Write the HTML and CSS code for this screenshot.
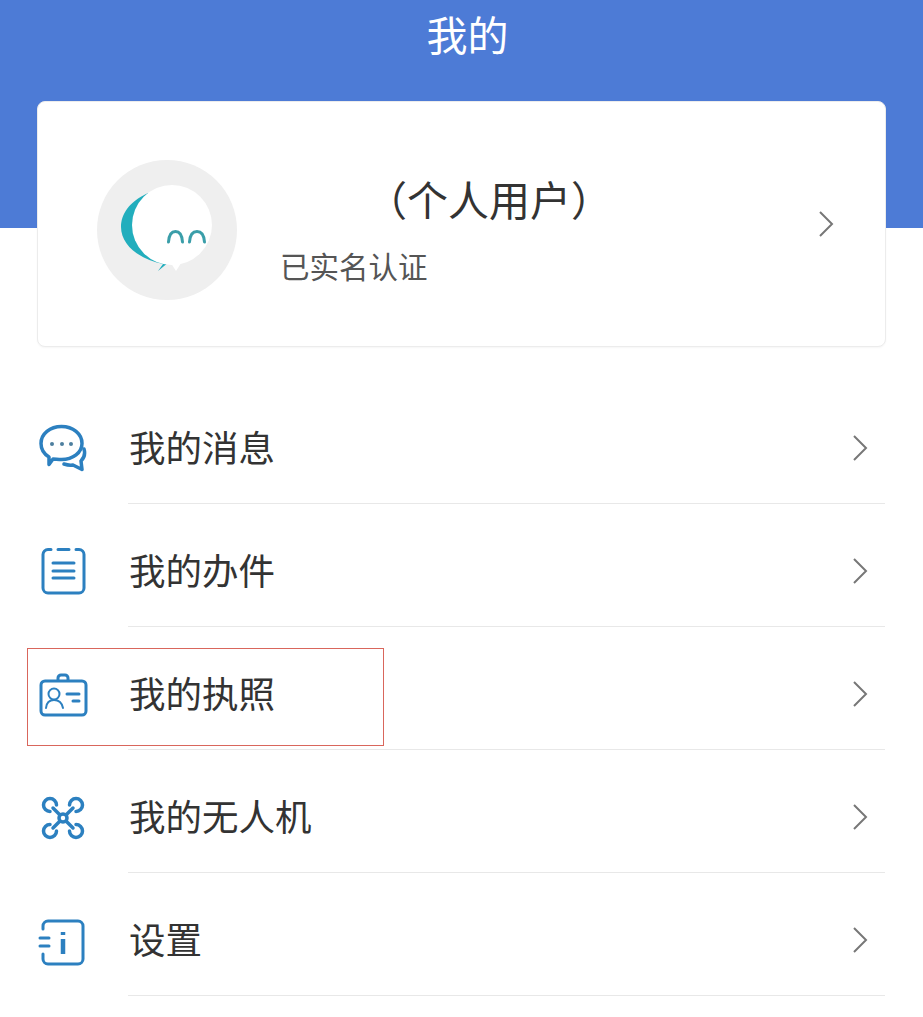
FILE: index.html
```html
<!DOCTYPE html>
<html lang="zh-CN">
<head>
    <meta charset="UTF-8">
    <meta name="viewport" content="width=device-width, initial-scale=1.0">
    <title>我的</title>
    <link rel="stylesheet" href="styles.css">
</head>
<body>
    <header class="top-bar">
        <h1 class="top-title">我的</h1>
    </header>

    <section class="user-card">
        <svg class="avatar" viewBox="0 0 140 140">
            <circle cx="70" cy="70" r="70" fill="#efefef"/>
            <path d="M51 33C32 42 24 54 24 67C24 85 42 99 66 104L61 111L72 102L60 60Z" fill="#22aebd"/>
            <path d="M72 100L79 111L86 100Z" fill="#fff"/>
            <circle cx="75" cy="65" r="40" fill="#fff"/>
            <path class="avatar-eye" d="M71.500 82C72 75 74.500 71.500 78.500 71.500C82.500 71.500 85 75 85.500 82M92.500 82C93 75 96 71.500 100 71.500C104 71.500 107 75 107.500 82"/>
        </svg>
        <div class="user-info">
            <div class="user-name">（个人用户）</div>
            <div class="user-status">已实名认证</div>
        </div>
        <svg class="chevron" viewBox="0 0 16 28"><path d="M2 2L14 14L2 26"/></svg>
    </section>

    <ul class="menu">
        <li class="menu-row">
            <svg class="menu-icon icon-heavy" viewBox="0 0 52 52">
                <path d="M13 33C8 30 5 25 5 19.500C5 10 14 2.500 25.500 2.500C37 2.500 46 10 46 19.500C46 28.500 37 35.500 25.500 35.500C22 35.500 19.500 35 17 35L13 40.500Z"/>
                <path d="M48 25C49.500 30 48 34 45 37L46 45.500L37 41C34 41.500 31 41 28 40"/>
                <circle class="icon-dot" cx="16" cy="20" r="2"/>
                <circle class="icon-dot" cx="26" cy="20" r="2"/>
                <circle class="icon-dot" cx="35" cy="20" r="2"/>
            </svg>
            <div class="menu-body">
                <span class="menu-label">我的消息</span>
                <svg class="chevron" viewBox="0 0 16 28"><path d="M2 2L14 14L2 26"/></svg>
            </div>
        </li>
        <li class="menu-row">
            <svg class="menu-icon" viewBox="0 0 52 52">
                <path d="M15 2.500H12a5 5 0 0 0-5 5V41a5 5 0 0 0 5 5H43a5 5 0 0 0 5-5V7.500a5 5 0 0 0-5-5H40M22 2.500H33"/>
                <path d="M17 16H38M17 24H38M17 31H38"/>
            </svg>
            <div class="menu-body">
                <span class="menu-label">我的办件</span>
                <svg class="chevron" viewBox="0 0 16 28"><path d="M2 2L14 14L2 26"/></svg>
            </div>
        </li>
        <li class="menu-row">
            <svg class="menu-icon" viewBox="0 0 52 52">
                <path d="M9 11H46a4 4 0 0 1 4 4V41a4 4 0 0 1-4 4H9a4 4 0 0 1-4-4V15a4 4 0 0 1 4-4Z"/>
                <path d="M22 10V8a3 3 0 0 1 3-3H29a3 3 0 0 1 3 3V10"/>
                <circle class="icon-thin" cx="18" cy="24" r="5.500"/>
                <path class="icon-thin" d="M10 38C10.500 33 13 30 18 30C23 30 26 33 27 38"/>
                <path d="M31 24H43M37 31H43"/>
            </svg>
            <div class="menu-body">
                <span class="menu-label">我的执照</span>
                <svg class="chevron" viewBox="0 0 16 28"><path d="M2 2L14 14L2 26"/></svg>
            </div>
            <div class="row-mark"></div>
        </li>
        <li class="menu-row">
            <svg class="menu-icon icon-heavy" viewBox="0 0 52 52">
                <defs>
                    <path id="rotor" d="M-6.500 -13A6.500 6.500 0 1 0 -13 -6.500M-3.500 -3.500L-10 -10"/>
                </defs>
                <g transform="translate(27 25)">
                    <use href="#rotor"/>
                    <use href="#rotor" transform="rotate(90)"/>
                    <use href="#rotor" transform="rotate(180)"/>
                    <use href="#rotor" transform="rotate(270)"/>
                    <circle r="4"/>
                </g>
            </svg>
            <div class="menu-body">
                <span class="menu-label">我的无人机</span>
                <svg class="chevron" viewBox="0 0 16 28"><path d="M2 2L14 14L2 26"/></svg>
            </div>
        </li>
        <li class="menu-row">
            <svg class="menu-icon" viewBox="0 0 52 52">
                <path d="M7 13V10a5 5 0 0 1 5-5H42a5 5 0 0 1 5 5V43a5 5 0 0 1-5 5H12a5 5 0 0 1-5-5V38"/>
                <path d="M4 22H13M4 30H13"/>
                <path class="icon-bold" d="M27 16V19M27 23V38"/>
            </svg>
            <div class="menu-body">
                <span class="menu-label">设置</span>
                <svg class="chevron" viewBox="0 0 16 28"><path d="M2 2L14 14L2 26"/></svg>
            </div>
        </li>
    </ul>
</body>
</html>
```

FILE: styles.css
```css
* { box-sizing: border-box; }
html, body { height: 100%; }
body {
    margin: 0; background: #fff; color: #333; overflow: hidden;
    font-family: "Noto Sans CJK SC", "Noto Sans", sans-serif;
}

.top-bar { height: 228px; background: #4d7bd6; }
.top-title {
    margin: 0; padding-left: 12px; height: 66px; line-height: 66px; text-align: center;
    font-size: 41px; font-weight: 400; color: #fff;
}

.user-card {
    display: flex; align-items: center; height: 246px;
    margin: -127px 37px 0 37px; padding: 0 51px 0 59px;
    background: #fff; border: 1px solid #ececec; border-radius: 8px;
    box-shadow: 0 1px 2px rgba(0, 0, 0, 0.04);
}
.avatar { width: 140px; height: 140px; flex: none; margin-top: 11px; }
.avatar-eye { fill: none; stroke: #3a9ea9; stroke-width: 3; stroke-linecap: round; }
.user-info { flex: 1; margin: 9px 0 0 43px; }
.user-name { padding-left: 86px; font-size: 41px; line-height: 56px; color: #333; }
.user-status { margin-top: 17px; font-size: 29.500px; line-height: 44px; color: #555; }

.chevron { width: 16px; height: 28px; flex: none; fill: none; stroke: #777; stroke-width: 2; }

.menu { list-style: none; margin: 34px 0 0 0; padding: 0; }
.menu-row { position: relative; display: flex; height: 123px; padding-left: 36px; }
.menu-icon {
    width: 52px; height: 52px; flex: none; margin-top: 43px;
    fill: none; stroke: #2c80c0; stroke-width: 3; stroke-linecap: round; stroke-linejoin: round;
}
.icon-dot { fill: #4d7f9f; stroke: none; }
.icon-bold { stroke-width: 4.500; stroke-linecap: butt; }
.icon-thin { stroke-width: 2; }
.icon-heavy { stroke-width: 3.500; }
.menu-body {
    flex: 1; display: flex; align-items: center; justify-content: space-between;
    margin: 0 38px 0 40px; padding: 11px 17px 0 1px;
    border-bottom: 1px solid #e8e8e8;
}
.menu-label { margin-top: -2px; font-size: 36.500px; color: #333; }

/* red frame drawn over the licence row */
.row-mark {
    position: absolute; left: 27px; top: 21px; width: 357px; height: 98px;
    border: 1px solid #d9665c;
}
```
